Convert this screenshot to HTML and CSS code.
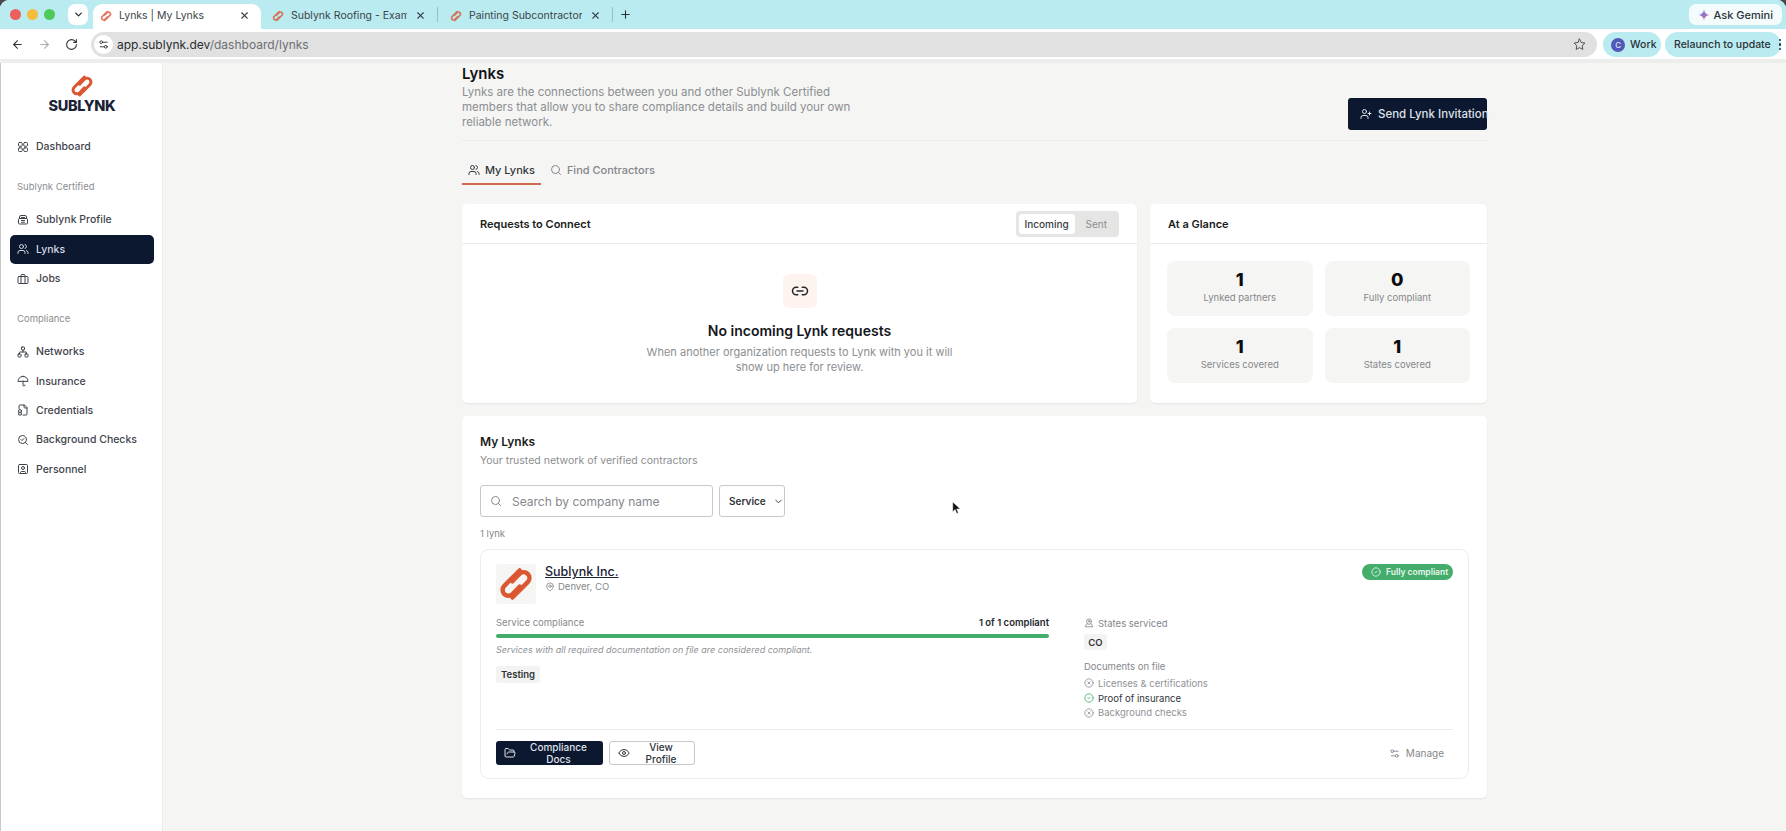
FILE: index.html
```html
<!DOCTYPE html>
<html lang="en">
<head>
    <meta charset="UTF-8">
    <title>Lynks | My Lynks</title>
    <link rel="stylesheet" href="styles.css">
</head>
<body>
    <svg class="sprite" xmlns="http://www.w3.org/2000/svg">
        <defs>
            <linearGradient id="gemGrad" x1="0" y1="0" x2="1" y2="1">
                <stop offset="0" stop-color="#4285f4"/>
                <stop offset="0.5" stop-color="#9b72cb"/>
                <stop offset="0.75" stop-color="#d96570"/>
                <stop offset="1" stop-color="#f4b400"/>
            </linearGradient>
        </defs>
        <symbol id="i-logo" viewBox="0 0 40 40"><path d="M24 5 7 22a6.5 6.5 0 0 0 9.2 9.2L24 23"/><path d="M16 35 33 18a6.5 6.5 0 0 0-9.2-9.2L16 17"/></symbol>
        <symbol id="i-grid" viewBox="0 0 24 24"><rect x="3" y="3" width="7.5" height="7.5" rx="2"/><rect x="13.5" y="3" width="7.5" height="7.5" rx="2"/><rect x="3" y="13.5" width="7.5" height="7.5" rx="2"/><rect x="13.5" y="13.5" width="7.5" height="7.5" rx="2"/></symbol>
        <symbol id="i-users" viewBox="0 0 24 24"><path d="M16 21v-2a4 4 0 0 0-4-4H6a4 4 0 0 0-4 4v2"/><circle cx="9" cy="7" r="4"/><path d="M22 21v-2a4 4 0 0 0-3-3.87"/><path d="M16 3.13a4 4 0 0 1 0 7.75"/></symbol>
        <symbol id="i-user-plus" viewBox="0 0 24 24"><path d="M16 21v-2a4 4 0 0 0-4-4H6a4 4 0 0 0-4 4v2"/><circle cx="9" cy="7" r="4"/><path d="M19 8v6"/><path d="M22 11h-6"/></symbol>
        <symbol id="i-search" viewBox="0 0 24 24"><circle cx="11" cy="11" r="8"/><path d="m21 21-4.3-4.3"/></symbol>
        <symbol id="i-search-check" viewBox="0 0 24 24"><path d="m8 11 2 2 4-4"/><circle cx="11" cy="11" r="8"/><path d="m21 21-4.3-4.3"/></symbol>
        <symbol id="i-link" viewBox="0 0 24 24"><path d="M9 17H7A5 5 0 0 1 7 7h2"/><path d="M15 7h2a5 5 0 1 1 0 10h-2"/><path d="M8 12h8"/></symbol>
        <symbol id="i-profile" viewBox="0 0 24 24"><path d="M5 9V6a3 3 0 0 1 3-3h8a3 3 0 0 1 3 3v3"/><rect x="3" y="9" width="18" height="11" rx="2"/><path d="M9 13h6"/><path d="M9 16.500h6"/><path d="M9 7h6"/></symbol>
        <symbol id="i-briefcase" viewBox="0 0 24 24"><rect x="2" y="7" width="20" height="14" rx="2"/><path d="M16 21V5a2 2 0 0 0-2-2h-4a2 2 0 0 0-2 2v16"/></symbol>
        <symbol id="i-network" viewBox="0 0 24 24"><rect x="16" y="16" width="6" height="6" rx="1"/><rect x="2" y="16" width="6" height="6" rx="1"/><rect x="9" y="2" width="6" height="6" rx="1"/><path d="M5 16v-3a1 1 0 0 1 1-1h12a1 1 0 0 1 1 1v3"/><path d="M12 12V8"/></symbol>
        <symbol id="i-umbrella" viewBox="0 0 24 24"><path d="M22 12a10.060 10.060 1 0 0-20 0Z"/><path d="M12 12v8a2 2 0 0 0 4 0"/><path d="M12 2v1"/></symbol>
        <symbol id="i-file" viewBox="0 0 24 24"><path d="M12 22h6a2 2 0 0 0 2-2V7l-5-5H6a2 2 0 0 0-2 2v5"/><path d="M14 2v4a2 2 0 0 0 2 2h4"/><circle cx="6" cy="14" r="3"/><path d="M3.500 17v5h5v-5"/></symbol>
        <symbol id="i-square-user" viewBox="0 0 24 24"><rect x="3" y="3" width="18" height="18" rx="2"/><circle cx="12" cy="10" r="3"/><path d="M7 21v-2a2 2 0 0 1 2-2h6a2 2 0 0 1 2 2v2"/></symbol>
        <symbol id="i-folder" viewBox="0 0 24 24"><path d="m6 14 1.500-2.900A2 2 0 0 1 9.240 10H20a2 2 0 0 1 1.940 2.500l-1.540 6a2 2 0 0 1-1.950 1.500H4a2 2 0 0 1-2-2V5a2 2 0 0 1 2-2h3.900a2 2 0 0 1 1.690.9l.81 1.200a2 2 0 0 0 1.670.9H18a2 2 0 0 1 2 2v2"/></symbol>
        <symbol id="i-eye" viewBox="0 0 24 24"><path d="M2.060 12.350a1 1 0 0 1 0-.7 10.750 10.750 0 0 1 19.880 0 1 1 0 0 1 0 .7 10.750 10.750 0 0 1-19.880 0"/><circle cx="12" cy="12" r="3"/></symbol>
        <symbol id="i-pin" viewBox="0 0 24 24"><path d="M20 10c0 6-8 12-8 12s-8-6-8-12a8 8 0 0 1 16 0Z"/><circle cx="12" cy="10" r="3"/></symbol>
        <symbol id="i-map" viewBox="0 0 24 24"><path d="M18 8c0 3.600-6 8-6 8s-6-4.400-6-8a6 6 0 0 1 12 0"/><circle cx="12" cy="8" r="2"/><path d="M8.800 14H6l-3 7h18l-3-7h-2.800"/></symbol>
        <symbol id="i-check" viewBox="0 0 24 24"><circle cx="12" cy="12" r="10"/><path d="m9 12 2 2 4-4"/></symbol>
        <symbol id="i-cross" viewBox="0 0 24 24"><circle cx="12" cy="12" r="10"/><path d="m15 9-6 6"/><path d="m9 9 6 6"/></symbol>
        <symbol id="i-sliders" viewBox="0 0 24 24"><path d="M20 7h-9"/><path d="M14 17H5"/><circle cx="17" cy="17" r="3"/><circle cx="7" cy="7" r="3"/></symbol>
        <symbol id="i-chevron" viewBox="0 0 24 24"><path d="m6 9 6 6 6-6"/></symbol>
        <symbol id="i-back" viewBox="0 0 24 24"><path d="m12 19-7-7 7-7"/><path d="M19 12H5"/></symbol>
        <symbol id="i-forward" viewBox="0 0 24 24"><path d="m12 5 7 7-7 7"/><path d="M5 12h14"/></symbol>
        <symbol id="i-reload" viewBox="0 0 24 24"><path d="M21 12a9 9 0 1 1-9-9c2.520 0 4.930 1 6.740 2.740L21 8"/><path d="M21 3v5h-5"/></symbol>
        <symbol id="i-star" viewBox="0 0 24 24"><path d="M12 2l3.090 6.260L22 9.270l-5 4.870 1.180 6.880L12 17.770l-6.180 3.250L7 14.140 2 9.270l6.910-1.010z"/></symbol>
        <symbol id="i-x" viewBox="0 0 24 24"><path d="M18 6 6 18"/><path d="m6 6 12 12"/></symbol>
        <symbol id="i-plus" viewBox="0 0 24 24"><path d="M5 12h14"/><path d="M12 5v14"/></symbol>
    </svg>

    <div class="window">
        <!-- browser tab strip -->
        <div class="tabstrip">
            <div class="lights">
                <span class="light red"></span>
                <span class="light yellow"></span>
                <span class="light green"></span>
            </div>
            <div class="tab-menu"><svg class="icon bold"><use href="#i-chevron"/></svg></div>
            <div class="tab active">
                <svg class="logo-stroke favicon"><use href="#i-logo"/></svg>
                <span class="tab-title">Lynks | My Lynks</span>
                <svg class="icon tab-x"><use href="#i-x"/></svg>
            </div>
            <div class="tab">
                <svg class="logo-stroke favicon"><use href="#i-logo"/></svg>
                <span class="tab-title">Sublynk Roofing - Example Organization</span>
                <svg class="icon tab-x"><use href="#i-x"/></svg>
            </div>
            <span class="tab-sep"></span>
            <div class="tab">
                <svg class="logo-stroke favicon"><use href="#i-logo"/></svg>
                <span class="tab-title">Painting Subcontractors Need Compliance</span>
                <svg class="icon tab-x"><use href="#i-x"/></svg>
            </div>
            <span class="tab-sep"></span>
            <svg class="icon tab-plus"><use href="#i-plus"/></svg>
            <div class="gemini">
                <svg class="gem-star" viewBox="0 0 24 24"><path d="M12 1C12.800 7.500 16.500 11.200 23 12 16.500 12.800 12.800 16.500 12 23 11.200 16.500 7.500 12.800 1 12 7.500 11.200 11.200 7.500 12 1Z"/></svg>
                Ask Gemini
            </div>
        </div>

        <!-- browser toolbar -->
        <div class="toolbar">
            <svg class="icon nav-btn"><use href="#i-back"/></svg>
            <svg class="icon nav-btn faded"><use href="#i-forward"/></svg>
            <svg class="icon nav-btn"><use href="#i-reload"/></svg>
            <div class="address">
                <span class="site-info"><svg class="icon"><use href="#i-sliders"/></svg></span>
                <span class="url">app.sublynk.dev<span class="url-path">/dashboard/lynks</span></span>
                <svg class="icon star"><use href="#i-star"/></svg>
            </div>
            <div class="pill work"><span class="avatar">C</span>Work</div>
            <div class="pill relaunch">Relaunch to update<span class="dots"><i></i><i></i><i></i></span></div>
        </div>

        <div class="app">
            <aside class="sidebar">
                <div class="brand">
                    <svg class="logo-stroke brand-mark"><use href="#i-logo"/></svg>
                    <div class="brand-name">SUBLYNK</div>
                </div>
                <a class="nav-item"><svg class="icon"><use href="#i-grid"/></svg>Dashboard</a>
                <div class="nav-label">Sublynk Certified</div>
                <a class="nav-item"><svg class="icon"><use href="#i-profile"/></svg>Sublynk Profile</a>
                <a class="nav-item current"><svg class="icon"><use href="#i-users"/></svg>Lynks</a>
                <a class="nav-item"><svg class="icon"><use href="#i-briefcase"/></svg>Jobs</a>
                <div class="nav-label">Compliance</div>
                <a class="nav-item"><svg class="icon"><use href="#i-network"/></svg>Networks</a>
                <a class="nav-item"><svg class="icon"><use href="#i-umbrella"/></svg>Insurance</a>
                <a class="nav-item"><svg class="icon"><use href="#i-file"/></svg>Credentials</a>
                <a class="nav-item"><svg class="icon"><use href="#i-search-check"/></svg>Background Checks</a>
                <a class="nav-item"><svg class="icon"><use href="#i-square-user"/></svg>Personnel</a>
            </aside>

            <main class="main">
                <div class="content">
                    <header class="page-head">
                        <div>
                            <h1>Lynks</h1>
                            <p>Lynks are the connections between you and other Sublynk Certified members that allow you to share compliance details and build your own reliable network.</p>
                        </div>
                        <button class="btn dark send"><svg class="icon"><use href="#i-user-plus"/></svg>Send Lynk Invitation</button>
                    </header>

                    <nav class="tabs">
                        <a class="page-tab selected"><svg class="icon"><use href="#i-users"/></svg>My Lynks</a>
                        <a class="page-tab"><svg class="icon"><use href="#i-search"/></svg>Find Contractors</a>
                    </nav>

                    <div class="top-grid">
                        <section class="card">
                            <div class="card-head">
                                <h2>Requests to Connect</h2>
                                <div class="toggle">
                                    <span class="toggle-opt on">Incoming</span>
                                    <span class="toggle-opt">Sent</span>
                                </div>
                            </div>
                            <div class="empty">
                                <div class="empty-icon"><svg class="icon"><use href="#i-link"/></svg></div>
                                <h3>No incoming Lynk requests</h3>
                                <p>When another organization requests to Lynk with you it will show up here for review.</p>
                            </div>
                        </section>

                        <section class="card">
                            <div class="card-head">
                                <h2>At a Glance</h2>
                            </div>
                            <div class="stats">
                                <div class="stat"><b>1</b><span>Lynked partners</span></div>
                                <div class="stat"><b>0</b><span>Fully compliant</span></div>
                                <div class="stat"><b>1</b><span>Services covered</span></div>
                                <div class="stat"><b>1</b><span>States covered</span></div>
                            </div>
                        </section>
                    </div>

                    <section class="card lynks">
                        <h2 class="lynks-title">My Lynks</h2>
                        <p class="lynks-sub">Your trusted network of verified contractors</p>
                        <div class="filters">
                            <label class="search">
                                <svg class="icon"><use href="#i-search"/></svg>
                                <span>Search by company name</span>
                            </label>
                            <div class="select">Service<svg class="icon"><use href="#i-chevron"/></svg></div>
                        </div>
                        <div class="count">1 lynk</div>

                        <article class="lynk">
                            <div class="lynk-head">
                                <div class="lynk-logo"><svg class="logo-stroke"><use href="#i-logo"/></svg></div>
                                <div class="lynk-id">
                                    <a class="lynk-name">Sublynk Inc.</a>
                                    <div class="lynk-place"><svg class="icon"><use href="#i-pin"/></svg>Denver, CO</div>
                                </div>
                                <span class="badge"><svg class="icon"><use href="#i-check"/></svg>Fully compliant</span>
                            </div>

                            <div class="lynk-body">
                                <div>
                                    <div class="comp-row">
                                        <span>Service compliance</span>
                                        <strong>1 of 1 compliant</strong>
                                    </div>
                                    <div class="bar"></div>
                                    <div class="note">Services with all required documentation on file are considered compliant.</div>
                                    <span class="tag testing">Testing</span>
                                </div>
                                <div>
                                    <div class="states"><svg class="icon"><use href="#i-map"/></svg>States serviced</div>
                                    <span class="tag co">CO</span>
                                    <div class="docs-title">Documents on file</div>
                                    <div class="doc"><svg class="icon"><use href="#i-cross"/></svg>Licenses &amp; certifications</div>
                                    <div class="doc ok"><svg class="icon"><use href="#i-check"/></svg>Proof of insurance</div>
                                    <div class="doc"><svg class="icon"><use href="#i-cross"/></svg>Background checks</div>
                                </div>
                            </div>

                            <div class="lynk-foot">
                                <button class="btn dark small"><svg class="icon"><use href="#i-folder"/></svg>Compliance Docs</button>
                                <button class="btn outline small"><svg class="icon"><use href="#i-eye"/></svg>View Profile</button>
                                <a class="manage"><svg class="icon"><use href="#i-sliders"/></svg>Manage</a>
                            </div>
                        </article>
                    </section>
                </div>
            </main>
        </div>
    </div>

    <svg class="cursor" viewBox="0 0 12 18"><path d="M1 1v13l3.200-3 2.200 5.200 2-.9L6.300 10.200H11z"/></svg>
</body>
</html>
```

FILE: styles.css
```css
* {
    box-sizing: border-box;
}

html, body {
    margin: 0;
    height: 100%;
}

body {
    background: #4a4650;
    font-family: Inter, "Noto Sans", sans-serif;
    color: #16181d;
    overflow: hidden;
}

h1, h2, h3, p {
    margin: 0;
}

.sprite {
    position: absolute;
    width: 0;
    height: 0;
}

.icon {
    flex: none;
    width: 12px;
    height: 12px;
    fill: none;
    stroke: currentColor;
    stroke-width: 2;
    stroke-linecap: round;
    stroke-linejoin: round;
}

.logo-stroke {
    fill: none;
    stroke: #dc5632;
    stroke-width: 5;
    stroke-linecap: round;
    stroke-linejoin: round;
}

.window {
    height: 831px;
    border-radius: 9px 9px 0 0;
    overflow: hidden;
    background: #fff;
}

/* browser chrome */
.tabstrip {
    display: flex;
    align-items: flex-end;
    height: 29px;
    padding-left: 10px;
    background: #b9ebf0;
}

.lights {
    display: flex;
    gap: 6px;
    align-self: flex-start;
    margin-top: 9px;
}

.light {
    width: 11px;
    height: 11px;
    border-radius: 50%;
}

.red { background: #ec5f5c; }
.yellow { background: #f4bd3c; }
.green { background: #4fc95a; }

.tab-menu {
    display: flex;
    align-items: center;
    justify-content: center;
    align-self: flex-start;
    width: 20px;
    height: 21px;
    margin: 4px 5px 0 13px;
    border-radius: 7px;
    background: #fff;
    color: #2b3338;
}

.tab-menu .icon {
    width: 11px;
    height: 11px;
    stroke-width: 3;
}

.tab {
    display: flex;
    align-items: center;
    width: 168px;
    height: 25px;
    padding: 0 11px 2px 6px;
    font-size: 10.500px;
    color: #3c4449;
}

.tab.active {
    width: 168px;
    padding-left: 7px;
    border-radius: 9px 9px 0 0;
    background: #fff;
}

.tab + .tab {
    width: 176px;
    padding-left: 11px;
}

.tab-sep + .tab {
    width: 174px;
    padding-left: 12px;
}

.favicon {
    flex: none;
    width: 12px;
    height: 12px;
    margin-right: 7px;
    opacity: 0.8;
}

.tab-title {
    flex: 1;
    min-width: 0;
    overflow: hidden;
    white-space: nowrap;
}

.tab-x {
    width: 11px;
    height: 11px;
    margin-left: 8px;
    stroke-width: 2.400;
}

.tab-sep {
    align-self: center;
    width: 1px;
    height: 15px;
    background: #8fc4cb;
}

.tab-plus {
    align-self: center;
    width: 13px;
    height: 13px;
    margin-left: 6px;
    color: #2b3338;
}

.gemini {
    display: flex;
    align-items: center;
    gap: 4px;
    align-self: flex-start;
    height: 21px;
    margin: 4px 4px 0 auto;
    padding: 0 9px;
    border-radius: 7px;
    background: #f3fbfc;
    font-size: 11px;
    font-weight: 500;
    color: #2b3338;
}

.gem-star {
    width: 12px;
    height: 12px;
    fill: url(#gemGrad);
}

.toolbar {
    display: flex;
    align-items: center;
    height: 34px;
    padding: 0 5px 0 11px;
    border-bottom: 4px solid #ededeb;
    background: #fff;
}

.nav-btn {
    width: 13px;
    height: 13px;
    margin-right: 14px;
    color: #30363a;
}

.nav-btn.faded {
    color: #a9adaf;
}

.address {
    display: flex;
    align-items: center;
    width: 1508px;
    height: 25px;
    margin-left: -1px;
    margin-top: 1px;
    padding: 0 11px 0 3px;
    border-radius: 13px;
    background: #e1e1e1;
    font-size: 12px;
}

.site-info {
    display: flex;
    align-items: center;
    justify-content: center;
    width: 19px;
    height: 19px;
    margin-right: 4px;
    border-radius: 50%;
    background: #fff;
    color: #30363a;
}

.site-info .icon {
    width: 11px;
    height: 11px;
}

.url {
    flex: 1;
    color: #272c30;
}

.url-path {
    color: #6b6f73;
}

.star {
    width: 13px;
    height: 13px;
    stroke-width: 1.800;
    color: #4a4f52;
}

.pill {
    display: flex;
    align-items: center;
    height: 25px;
    margin-top: 1px;
    border-radius: 13px;
    background: #b9ebf0;
    font-size: 10.500px;
    font-weight: 500;
    color: #2b3338;
}

.work {
    width: 58px;
    margin-left: 6px;
    padding-left: 8px;
    gap: 5px;
}

.avatar {
    display: flex;
    align-items: center;
    justify-content: center;
    width: 14px;
    height: 14px;
    border-radius: 50%;
    background: #5059b8;
    font-size: 8px;
    color: #dfe2f5;
}

.relaunch {
    width: 116px;
    margin-left: 4px;
    padding-left: 9px;
    white-space: nowrap;
}

.dots {
    display: flex;
    flex-direction: column;
    gap: 2px;
    margin-left: 8px;
}

.dots i {
    width: 2.500px;
    height: 2.500px;
    border-radius: 50%;
    background: #2b3338;
}

/* app shell */
.app {
    display: flex;
    height: 768px;
}

.sidebar {
    flex: none;
    width: 163px;
    padding: 0 8px 0 9px;
    border-left: 1px solid #c9c9c9;
    border-right: 1px solid #ececea;
    background: #fff;
}

.brand {
    height: 69px;
    padding-top: 11px;
    text-align: center;
}

.brand-mark {
    display: block;
    width: 26px;
    height: 24px;
    margin: 0 auto;
}

.brand-name {
    margin-top: 0;
    font-size: 14.500px;
    line-height: 16px;
    font-weight: 800;
    color: #1a2236;
    letter-spacing: -0.3px;
}

.nav-item {
    display: flex;
    align-items: center;
    gap: 7px;
    height: 29.300px;
    padding-left: 7px;
    border-radius: 5px;
    font-size: 10.500px;
    font-weight: 500;
    color: #3f444c;
}

.nav-item.current {
    background: #0c1730;
    color: #d7dbe4;
}

.nav-label {
    height: 14px;
    margin: 19px 0 11px 7px;
    font-size: 9.500px;
    line-height: 14px;
    color: #8a8d91;
}

/* page */
.main {
    flex: 1;
    min-width: 0;
    background: #f5f5f3;
}

.content {
    width: 1025px;
    margin: 0 auto;
}

.page-head {
    display: flex;
    align-items: flex-end;
    justify-content: space-between;
    height: 78px;
    padding-top: 16px;
    padding-bottom: 10px;
    border-bottom: 1px solid #ebebe9;
}

.page-head h1 {
    font-size: 15px;
    line-height: 18px;
    font-weight: 600;
    color: #111318;
}

.page-head p {
    width: 400px;
    margin-top: 2px;
    font-size: 11.500px;
    line-height: 15px;
    color: #8b8e92;
}

.btn {
    display: inline-flex;
    align-items: center;
    border: 0;
    border-radius: 3px;
    font-family: inherit;
    font-weight: 500;
}

.btn.dark {
    background: #0c1730;
    color: #dfe2e8;
}

.send {
    gap: 6px;
    height: 32px;
    width: 139px;
    padding-left: 12px;
    font-size: 11.500px;
    white-space: nowrap;
}

.tabs {
    display: flex;
    margin-top: 15px;
}

.page-tab {
    display: flex;
    align-items: center;
    gap: 5px;
    height: 29px;
    padding: 0 6px;
    border-bottom: 2px solid transparent;
    font-size: 11px;
    font-weight: 500;
    color: #84878b;
}

.page-tab + .page-tab {
    margin-left: 3px;
}

.page-tab.selected {
    border-bottom-color: #cf6a50;
    color: #33373d;
}

.top-grid {
    display: grid;
    grid-template-columns: 675px 1fr;
    gap: 13px;
    height: 199px;
    margin-top: 19px;
}

.card {
    border-radius: 5px;
    background: #fff;
    box-shadow: 0 1px 2px rgba(0, 0, 0, 0.07);
}

.card-head {
    display: flex;
    align-items: center;
    justify-content: space-between;
    height: 40px;
    padding: 0 18px;
    border-bottom: 1px solid #ebebe9;
}

.card-head h2 {
    font-size: 11px;
    font-weight: 600;
    color: #1a1c20;
}

.toggle {
    display: flex;
    height: 26px;
    padding: 3px;
    border-radius: 4px;
    background: #e5e5e3;
    font-size: 10px;
}

.toggle-opt {
    display: flex;
    align-items: center;
    padding: 0 9px 0 11px;
    border-radius: 3px;
    color: #8a8d90;
}

.toggle-opt.on {
    width: 56px;
    padding: 0;
    justify-content: center;
    background: #fff;
    color: #3a3e44;
    font-weight: 500;
}

.empty {
    padding-top: 30px;
    text-align: center;
}

.empty-icon {
    display: flex;
    align-items: center;
    justify-content: center;
    width: 34px;
    height: 34px;
    margin: 0 auto;
    border-radius: 6px;
    background: #fdf3ef;
    color: #24272c;
}

.empty-icon .icon {
    width: 18px;
    height: 18px;
}

.empty h3 {
    margin-top: 14px;
    font-size: 14px;
    line-height: 18px;
    font-weight: 600;
    color: #15171b;
}

.empty p {
    width: 330px;
    margin: 5px auto 0;
    font-size: 11px;
    line-height: 15px;
    color: #8b8e92;
}

.stats {
    display: grid;
    grid-template-columns: 1fr 1fr;
    gap: 12px;
    padding: 17px 17px 0 17px;
}

.stat {
    display: flex;
    flex-direction: column;
    align-items: center;
    height: 55px;
    padding-top: 8px;
    border-radius: 8px;
    background: #f5f5f3;
}

.stat b {
    font-size: 18px;
    line-height: 22px;
    font-weight: 800;
    color: #0b0c0f;
}

.stat span {
    font-size: 9.500px;
    line-height: 14px;
    color: #85888c;
}

.lynks {
    height: 382px;
    margin-top: 13px;
    padding: 18px 18px 0;
}

.lynks-title {
    font-size: 12px;
    line-height: 15px;
    font-weight: 600;
    color: #1a1c20;
}

.lynks-sub {
    margin-top: 4px;
    font-size: 10.500px;
    line-height: 15px;
    color: #8b8e92;
}

.filters {
    display: flex;
    gap: 6px;
    margin-top: 17px;
}

.search {
    display: flex;
    align-items: center;
    gap: 10px;
    width: 233px;
    height: 32px;
    padding-left: 9px;
    border: 1px solid #c8c8c8;
    border-radius: 3px;
    font-size: 12px;
    color: #85888c;
}

.select {
    display: flex;
    align-items: center;
    gap: 7px;
    width: 66px;
    height: 32px;
    padding-left: 9px;
    border: 1px solid #c8c8c8;
    border-radius: 3px;
    font-size: 10px;
    font-weight: 600;
    color: #30343a;
}

.select .icon {
    width: 11px;
    height: 11px;
}

.count {
    margin-top: 10px;
    font-size: 9.500px;
    line-height: 14px;
    color: #85888c;
}

.lynk {
    height: 230px;
    margin-top: 8px;
    padding: 14px 15px 0;
    border: 1px solid #ececea;
    border-radius: 9px;
}

.lynk-head {
    display: flex;
    align-items: flex-start;
    height: 40px;
}

.lynk-logo {
    display: flex;
    align-items: center;
    justify-content: center;
    width: 40px;
    height: 40px;
    border-radius: 3px;
    background: #f5f5f3;
}

.lynk-logo svg {
    width: 36px;
    height: 36px;
}

.lynk-id {
    margin-left: 9px;
}

.lynk-name {
    display: block;
    font-size: 12.500px;
    line-height: 16px;
    font-weight: 500;
    color: #1a2236;
    text-decoration: underline;
}

.lynk-place {
    display: flex;
    align-items: center;
    gap: 3px;
    font-size: 9.500px;
    line-height: 14px;
    color: #85888c;
}

.lynk-place .icon {
    width: 10px;
    height: 10px;
}

.badge {
    display: flex;
    align-items: center;
    gap: 5px;
    width: 91px;
    height: 16px;
    margin-left: auto;
    padding-left: 9px;
    border-radius: 8px;
    background: #45ad6c;
    font-size: 8.500px;
    font-weight: 600;
    color: #e8f6ed;
}

.badge .icon {
    width: 10px;
    height: 10px;
}

.lynk-body {
    display: grid;
    grid-template-columns: 553px 1fr;
    column-gap: 35px;
    height: 113px;
    margin-top: 12px;
}

.comp-row {
    display: flex;
    justify-content: space-between;
    font-size: 9.500px;
    line-height: 14px;
    color: #85888c;
}

.comp-row strong {
    font-weight: 600;
    color: #24272c;
}

.bar {
    height: 4px;
    margin-top: 4px;
    border-radius: 2px;
    background: #45ad6c;
}

.note {
    margin-top: 5px;
    font-size: 9px;
    line-height: 14px;
    font-style: italic;
    color: #8f9296;
}

.tag {
    display: inline-flex;
    align-items: center;
    justify-content: center;
    border-radius: 3px;
    background: #f3f3f1;
    font-size: 9.500px;
    font-weight: 600;
    color: #30343a;
}

.testing {
    width: 44px;
    height: 17px;
    margin-top: 9px;
}

.co {
    display: flex;
    width: 23px;
    height: 16px;
    margin-top: 4px;
}

.states {
    display: flex;
    align-items: center;
    gap: 4px;
    height: 14px;
    font-size: 9.500px;
    color: #85888c;
}

.states .icon {
    width: 10px;
    height: 10px;
}

.docs-title {
    margin-top: 10px;
    font-size: 9.500px;
    line-height: 14px;
    color: #85888c;
}

.doc {
    display: flex;
    align-items: center;
    gap: 4px;
    height: 14.700px;
    font-size: 9.500px;
    color: #8f9296;
}

.docs-title + .doc {
    margin-top: 2px;
}

.doc .icon {
    width: 10px;
    height: 10px;
}

.doc.ok {
    color: #30343a;
}

.doc.ok .icon {
    color: #45ad6c;
}

.lynk-foot {
    display: flex;
    align-items: center;
    gap: 6px;
    height: 36px;
    margin-top: 0;
    padding-top: 11px;
    border-top: 1px solid #ececea;
}

.small {
    gap: 6px;
    height: 24px;
    padding: 0 8px;
    font-size: 10px;
}

.btn.dark.small {
    width: 107px;
}

.btn.outline {
    width: 86px;
    border: 1px solid #c8c8c8;
    background: #fff;
    color: #30343a;
}

.manage {
    display: flex;
    align-items: center;
    gap: 6px;
    margin-left: auto;
    margin-right: 9px;
    font-size: 10px;
    color: #85888c;
}

.manage .icon {
    width: 11px;
    height: 11px;
}

.cursor {
    position: absolute;
    left: 952px;
    top: 501px;
    width: 9px;
    height: 14px;
    fill: #111;
    stroke: #fff;
    stroke-width: 0.600;
}
```
